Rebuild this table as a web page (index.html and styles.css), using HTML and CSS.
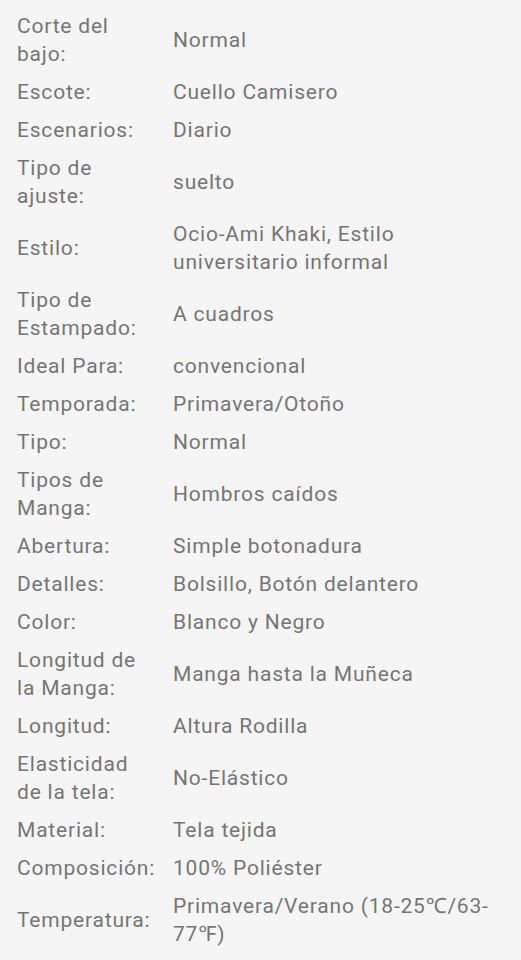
FILE: index.html
```html
<!DOCTYPE html>
<html lang="es">
<head>
  <meta charset="UTF-8" />
  <meta name="viewport" content="width=device-width, initial-scale=1.0"/>
  <title>Detalles del producto</title>
  <link rel="stylesheet" href="styles.css">
</head>
<body>

  <div class="specs">
    <div class="row"><div class="label">Corte del bajo:</div><div class="value">Normal</div></div>
    <div class="row"><div class="label">Escote:</div><div class="value">Cuello Camisero</div></div>
    <div class="row"><div class="label">Escenarios:</div><div class="value">Diario</div></div>
    <div class="row"><div class="label">Tipo de ajuste:</div><div class="value">suelto</div></div>
    <div class="row"><div class="label">Estilo:</div><div class="value">Ocio-Ami Khaki, Estilo universitario informal</div></div>
    <div class="row"><div class="label">Tipo de Estampado:</div><div class="value">A cuadros</div></div>
    <div class="row"><div class="label">Ideal Para:</div><div class="value">convencional</div></div>
    <div class="row"><div class="label">Temporada:</div><div class="value">Primavera/Otoño</div></div>
    <div class="row"><div class="label">Tipo:</div><div class="value">Normal</div></div>
    <div class="row"><div class="label">Tipos de Manga:</div><div class="value">Hombros caídos</div></div>
    <div class="row"><div class="label">Abertura:</div><div class="value">Simple botonadura</div></div>
    <div class="row"><div class="label">Detalles:</div><div class="value">Bolsillo, Botón delantero</div></div>
    <div class="row"><div class="label">Color:</div><div class="value">Blanco y Negro</div></div>
    <div class="row"><div class="label">Longitud de la Manga:</div><div class="value">Manga hasta la Muñeca</div></div>
    <div class="row"><div class="label">Longitud:</div><div class="value">Altura Rodilla</div></div>
    <div class="row"><div class="label">Elasticidad de la tela:</div><div class="value">No-Elástico</div></div>
    <div class="row"><div class="label">Material:</div><div class="value">Tela tejida</div></div>
    <div class="row"><div class="label">Composición:</div><div class="value">100% Poliéster</div></div>
    <div class="row"><div class="label">Temperatura:</div><div class="value">Primavera/Verano (18-25℃/63-77℉)</div></div>
  </div>

</body>
</html>
```

FILE: styles.css
```css
body {
  margin: 0;
  padding: 7px 17px 0 17px;
  background: #f5f5f5;
  font-family: Roboto, "Noto Sans", sans-serif;
  font-size: 21px;
  letter-spacing: 0.8px;
  line-height: 28px;
  color: #757575;
}

.specs {
  display: flex;
  flex-direction: column;
}

.row {
  display: grid;
  grid-template-columns: 139px 1fr;
  column-gap: 17px;
  align-items: center;
  padding: 5px 0;
}
```
